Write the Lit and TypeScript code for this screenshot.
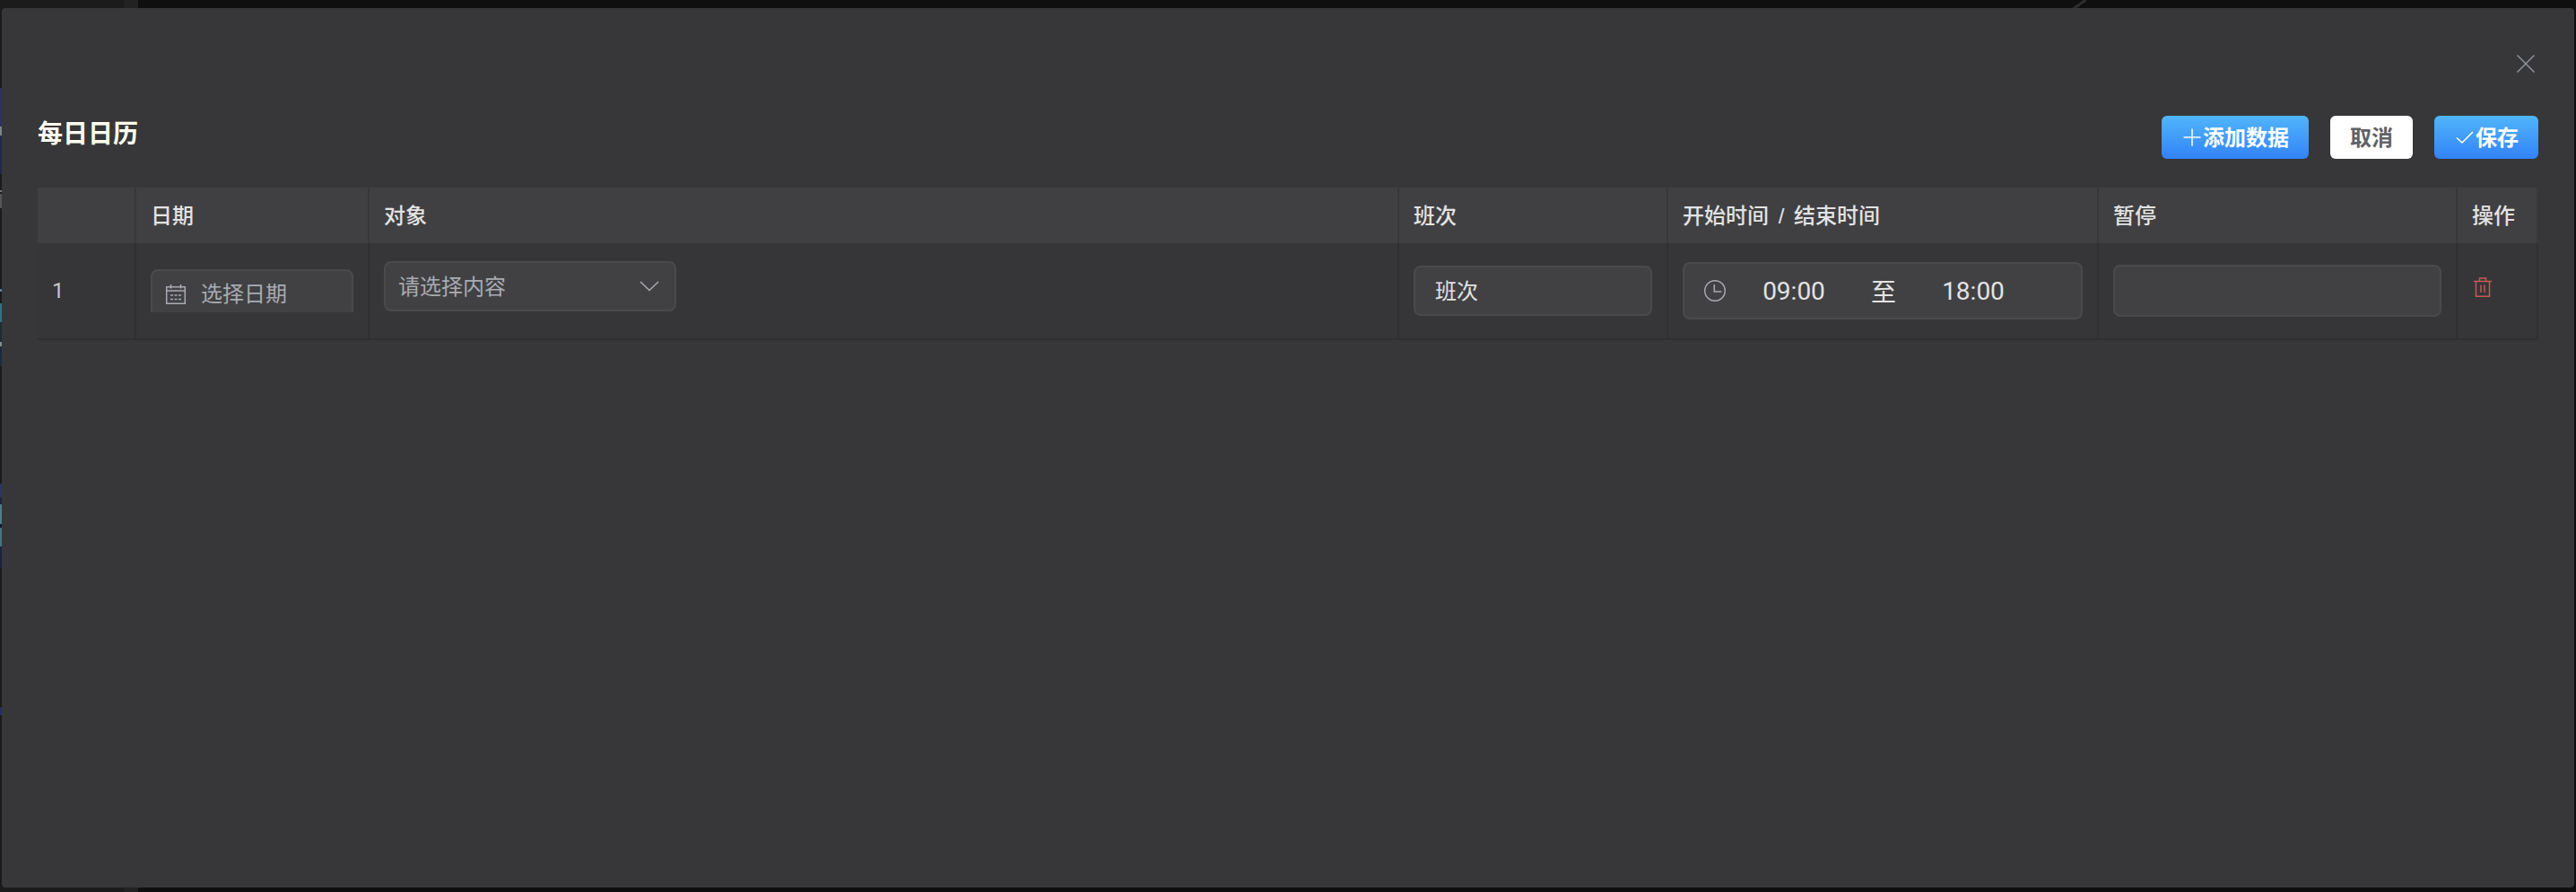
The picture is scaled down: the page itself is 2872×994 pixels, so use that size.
import { LitElement, html, css, svg } from "lit";
import { customElement, state } from "lit/decorators.js";

interface ShiftRow {
  id: number;
  date: string;
  shift: string;
  start: string;
  end: string;
  pause: string;
}

const icon = (cls: string, size: number, body: unknown) => html`
  <svg class=${cls} width=${size} height=${size} viewBox="0 0 ${size} ${size}" aria-hidden="true"
    fill="none" stroke="currentColor">${body}</svg>`;

const closeIcon = icon("glyph", 28, svg`<path stroke-width="1.5" d="M4.5 4.5l19 19M23.5 4.5l-19 19"/>`);
const plusIcon = icon("glyph", 24, svg`<path stroke-width="1.5" d="M2.5 12h19M12 2.5v19"/>`);
const checkIcon = icon("glyph", 24, svg`<path stroke-width="1.5" d="M3 12.5l6 5.5 12-12"/>`);
const arrowIcon = icon("arrow", 24, svg`<path stroke-width="1.5" d="M2 7l10 9.5L22 7"/>`);
const calendarIcon = icon("glyph", 24, svg`
  <path stroke-width="1.5" d="M1.7 3.7h20.6v18.6H1.7zM1.7 8h20.6M6.5 1v4.5M17.5 1v4.5"/>
  <path stroke-width="1.5" d="M6 13h3M10.5 13h3M15 13h3M6 17.5h3M10.5 17.5h3M15 17.5h3"/>`);
const clockIcon = icon("glyph", 24, svg`
  <circle cx="12" cy="12" r="11.3" stroke-width="1.4"/>
  <path stroke-width="1.5" d="M11.3 5v8h8"/>`);
const trashIcon = icon("glyph", 24, svg`
  <path stroke-width="1.5" d="M2 5.5h20M4.5 5.5v16.7h15V5.5M8.5 5.5V2h7v3.5M10 9.5v8.5M14 9.5v8.5"/>`);

@customElement("app-root")
export class AppRoot extends LitElement {
  static styles = css`
    :host {
      display: flex;
      flex-direction: column;
      box-sizing: border-box;
      min-height: 100vh;
      padding: 9px 2px 5px;
      font-family: "Liberation Sans", "Noto Sans CJK SC", sans-serif;
      font-size: 24px;
      color: #e3e3e3;
      background:
        linear-gradient(145deg, transparent 45%, #2b2b2b 45% 60%, transparent 60%) 2306px 0 / 20px 12px no-repeat,
        linear-gradient(#2e3160 0 43px, #7c8585 43px 53px, #222847 53px 96px, transparent 96px 114px,
          #777 114px 116px, transparent 116px 118px, #555 118px 134px, transparent 134px 224px,
          #5b7f9b 224px 227px, transparent 227px 240px, #357280 240px 261px, #1f2b33 261px 283px,
          #858b8a 283px 288px, #1c2b3b 288px 310px, transparent 310px 441px, #30345f 441px 456px,
          #20243a 456px 464px, #507f86 464px 486px, #16182c 486px 490px, #47767c 490px 511px,
          #1d2140 511px 535px, transparent 535px 690px, #2a2d5c 690px 699px, transparent 699px)
          0 98px / 2px 700px no-repeat,
        linear-gradient(90deg, #1b1b1b 0 138px, #222 138px 154px, #0f0f0f 154px);
    }
    * { box-sizing: border-box; }
    .dialog {
      flex: 1;
      padding: 48px 40px;
      border-radius: 4px;
      background: #373739;
    }
    .dialog-head {
      display: flex;
      justify-content: flex-end;
      margin-bottom: 44px;
    }
    button, input, select {
      font: inherit;
      color: inherit;
      margin: 0;
    }
    button { cursor: pointer; }
    svg { display: block; flex: none; }
    .icon-button {
      padding: 0;
      border: 0;
      background: none;
      color: #909399;
    }
    .toolbar {
      display: flex;
      justify-content: space-between;
      align-items: flex-start;
      margin-bottom: 32px;
    }
    h1 {
      margin: 0;
      font-size: 28px;
      line-height: 42px;
      font-weight: 700;
      color: #fffff0;
    }
    .actions { display: flex; gap: 24px; }
    .btn {
      display: flex;
      align-items: center;
      height: 48px;
      padding: 0 22px;
      border: 0;
      border-radius: 6px;
      font-weight: 700;
      color: #606266;
      background: #fff;
    }
    .btn span { padding-bottom: 4px; }
    .btn.primary {
      color: #fff;
      background: linear-gradient(#50b5fa, #3283f8);
    }
    table {
      width: 100%;
      table-layout: fixed;
      border-collapse: separate;
      border-spacing: 0;
    }
    .c-index { width: 110px; }
    .c-date { width: 260px; }
    .c-shift { width: 300px; }
    .c-time { width: 480px; }
    .c-pause { width: 400px; }
    .c-op { width: 90px; }
    th {
      height: 62px;
      padding: 0 16px 4px;
      border-right: 2px solid #38383a;
      text-align: left;
      font-weight: 500;
      background: #404042;
    }
    .slash { margin: 0 4px; }
    td {
      height: 108px;
      padding: 0 16px;
      border-right: 2px solid #303032;
      border-bottom: 2px solid #303032;
      vertical-align: middle;
      background: #363638;
    }
    .index { font-family: Roboto, sans-serif; color: #c6c7ca; }
    .field {
      display: flex;
      align-items: center;
      width: 100%;
      height: 56px;
      border: 2px solid #4a4a4c;
      border-radius: 8px;
      background: #414143;
      color: #e3e3e3;
    }
    .field input {
      flex: 1;
      min-width: 0;
      height: 100%;
      padding: 0;
      border: 0;
      outline: 0;
      background: none;
    }
    .field input::placeholder { color: #a9abb2; opacity: 1; }
    .clip { height: 48px; overflow: hidden; }
    .date { padding: 0 14px; gap: 16px; }
    .date .glyph, .range .glyph { color: #a9abb2; }
    .picker {
      display: grid;
      align-items: center;
      width: 326px;
      margin-bottom: 10px;
    }
    .picker select {
      grid-area: 1 / 1;
      appearance: none;
      padding: 0 48px 0 14px;
      color: #a9abb2;
    }
    .arrow {
      grid-area: 1 / 1;
      justify-self: end;
      margin-right: 18px;
      color: #a9abb2;
      pointer-events: none;
    }
    .shift { padding: 0 22px 4px; }
    .range {
      height: 64px;
      padding: 0 48px 0 22px;
      font-family: Roboto, "Noto Sans CJK SC", sans-serif;
      font-size: 28px;
    }
    .range .glyph { margin-right: 4px; }
    .range input { text-align: center; }
    .range span { width: 56px; text-align: center; }
    .pause { height: 58px; padding: 0 22px; }
    .delete { display: block; margin-bottom: 8px; color: #c45a54; }
  `;

  @state() private rows: ShiftRow[] = [
    { id: 1, date: "", shift: "班次", start: "09:00", end: "18:00", pause: "" },
  ];

  private addRow() {
    const id = this.rows.reduce((max, r) => Math.max(max, r.id), 0) + 1;
    this.rows = [...this.rows, { id, date: "", shift: "", start: "09:00", end: "18:00", pause: "" }];
  }

  private removeRow(id: number) {
    this.rows = this.rows.filter((r) => r.id !== id);
  }

  private renderRow(row: ShiftRow, index: number) {
    return html`
      <tr>
        <td class="index">${index + 1}</td>
        <td>
          <div class="clip">
            <label class="field date">${calendarIcon}
              <input type="text" aria-label="日期" placeholder="选择日期" .value=${row.date} />
            </label>
          </div>
        </td>
        <td>
          <div class="picker">
            <select class="field" aria-label="对象"><option>请选择内容</option></select>
            ${arrowIcon}
          </div>
        </td>
        <td><div class="field shift"><input type="text" aria-label="班次" .value=${row.shift} /></div></td>
        <td>
          <div class="field range">${clockIcon}
            <input type="text" aria-label="开始时间" .value=${row.start} />
            <span>至</span>
            <input type="text" aria-label="结束时间" .value=${row.end} />
          </div>
        </td>
        <td><div class="field pause"><input type="text" aria-label="暂停" .value=${row.pause} /></div></td>
        <td>
          <button class="icon-button delete" aria-label="删除" @click=${() => this.removeRow(row.id)}>
            ${trashIcon}
          </button>
        </td>
      </tr>`;
  }

  render() {
    return html`
      <main class="dialog" role="dialog" aria-labelledby="title">
        <div class="dialog-head">
          <button class="icon-button" aria-label="关闭">${closeIcon}</button>
        </div>
        <div class="toolbar">
          <h1 id="title">每日日历</h1>
          <div class="actions">
            <button class="btn primary" @click=${this.addRow}>${plusIcon}<span>添加数据</span></button>
            <button class="btn"><span>取消</span></button>
            <button class="btn primary">${checkIcon}<span>保存</span></button>
          </div>
        </div>
        <table>
          <colgroup>
            <col class="c-index" /><col class="c-date" /><col /><col class="c-shift" />
            <col class="c-time" /><col class="c-pause" /><col class="c-op" />
          </colgroup>
          <thead>
            <tr>
              <th></th>
              <th>日期</th>
              <th>对象</th>
              <th>班次</th>
              <th>开始时间 <span class="slash">/</span> 结束时间</th>
              <th>暂停</th>
              <th>操作</th>
            </tr>
          </thead>
          <tbody>${this.rows.map((row, i) => this.renderRow(row, i))}</tbody>
        </table>
      </main>`;
  }
}
